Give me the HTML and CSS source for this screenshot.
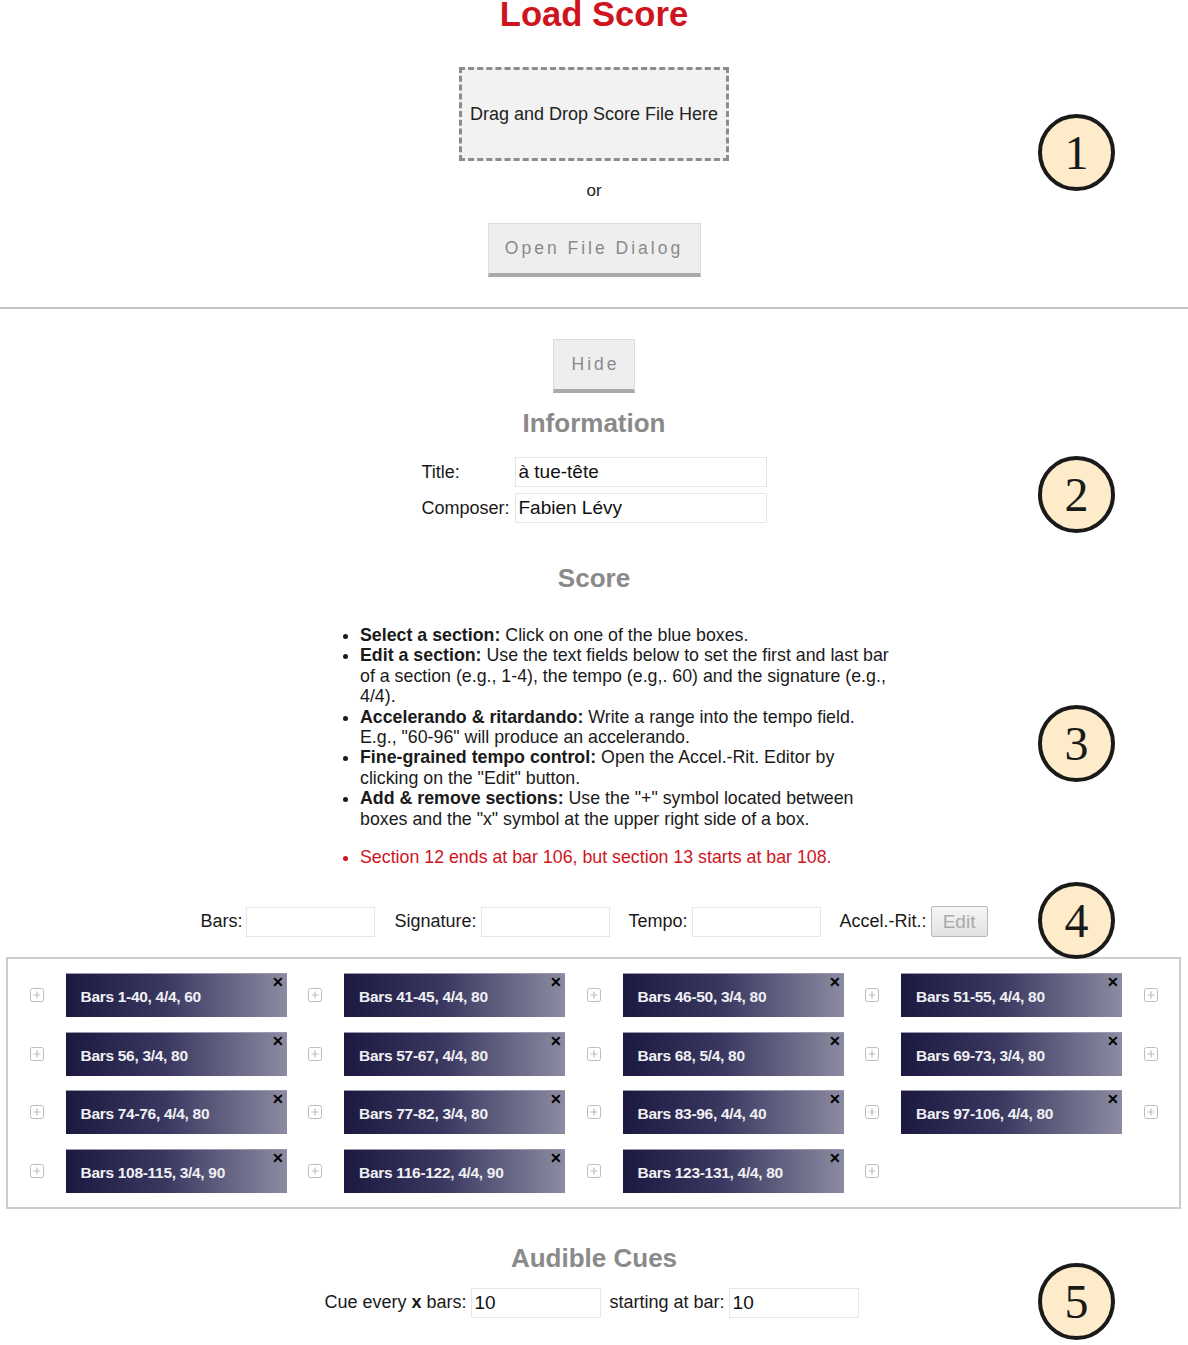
FILE: index.html
```html
<!DOCTYPE html>
<html lang="en">
<head>
<meta charset="utf-8">
<title>Load Score</title>
<link rel="stylesheet" href="styles.css">
</head>
<body>
<div class="page">
  <section class="load">
    <h1 class="title">Load Score</h1>
    <div class="dropzone">Drag and Drop Score File Here</div>
    <p class="or">or</p>
    <button class="btn btn-open">Open File Dialog</button>
  </section>

  <hr class="sep">

  <section class="info">
    <button class="btn btn-hide">Hide</button>
    <h2 class="heading h-info">Information</h2>
    <div class="info-form">
      <label class="lbl">Title:</label>
      <input class="field field-big" type="text" value="à tue-tête">
      <label class="lbl">Composer:</label>
      <input class="field field-big" type="text" value="Fabien Lévy">
    </div>
  </section>

  <section class="score">
    <h2 class="heading h-score">Score</h2>
    <ul class="help">
      <li><b>Select a section:</b> Click on one of the blue boxes.</li>
      <li><b>Edit a section:</b> Use the text fields below to set the first and last bar of a section (e.g., 1-4), the tempo (e.g,. 60) and the signature (e.g., 4/4).</li>
      <li><b>Accelerando &amp; ritardando:</b> Write a range into the tempo field. E.g., "60-96" will produce an accelerando.</li>
      <li><b>Fine-grained tempo control:</b> Open the Accel.-Rit. Editor by clicking on the "Edit" button.</li>
      <li><b>Add &amp; remove sections:</b> Use the "+" symbol located between boxes and the "x" symbol at the upper right side of a box.</li>
    </ul>
    <ul class="help errors">
      <li>Section 12 ends at bar 106, but section 13 starts at bar 108.</li>
    </ul>

    <div class="controls">
      <div class="ctl"><label class="lbl">Bars:</label><input class="field field-sm" type="text"></div>
      <div class="ctl"><label class="lbl">Signature:</label><input class="field field-sm" type="text"></div>
      <div class="ctl"><label class="lbl">Tempo:</label><input class="field field-sm" type="text"></div>
      <div class="ctl"><label class="lbl">Accel.-Rit.:</label><button class="btn-edit">Edit</button></div>
    </div>

    <div class="sections">
      <div class="row">
        <span class="plus"><svg viewBox="0 0 14 14" width="14" height="14"><rect x="0.5" y="0.5" width="13" height="13" rx="2" fill="#fff" stroke="#bdbdbd"/><path d="M7 3.5v7M3.5 7h7" stroke="#bdbdbd" stroke-width="1.2"/></svg></span>
        <div class="box">Bars 1-40, 4/4, 60<span class="x">✕</span></div>
        <span class="plus"><svg viewBox="0 0 14 14" width="14" height="14"><rect x="0.5" y="0.5" width="13" height="13" rx="2" fill="#fff" stroke="#bdbdbd"/><path d="M7 3.5v7M3.5 7h7" stroke="#bdbdbd" stroke-width="1.2"/></svg></span>
        <div class="box">Bars 41-45, 4/4, 80<span class="x">✕</span></div>
        <span class="plus"><svg viewBox="0 0 14 14" width="14" height="14"><rect x="0.5" y="0.5" width="13" height="13" rx="2" fill="#fff" stroke="#bdbdbd"/><path d="M7 3.5v7M3.5 7h7" stroke="#bdbdbd" stroke-width="1.2"/></svg></span>
        <div class="box">Bars 46-50, 3/4, 80<span class="x">✕</span></div>
        <span class="plus"><svg viewBox="0 0 14 14" width="14" height="14"><rect x="0.5" y="0.5" width="13" height="13" rx="2" fill="#fff" stroke="#bdbdbd"/><path d="M7 3.5v7M3.5 7h7" stroke="#bdbdbd" stroke-width="1.2"/></svg></span>
        <div class="box">Bars 51-55, 4/4, 80<span class="x">✕</span></div>
        <span class="plus"><svg viewBox="0 0 14 14" width="14" height="14"><rect x="0.5" y="0.5" width="13" height="13" rx="2" fill="#fff" stroke="#bdbdbd"/><path d="M7 3.5v7M3.5 7h7" stroke="#bdbdbd" stroke-width="1.2"/></svg></span>
      </div>
      <div class="row">
        <span class="plus"><svg viewBox="0 0 14 14" width="14" height="14"><rect x="0.5" y="0.5" width="13" height="13" rx="2" fill="#fff" stroke="#bdbdbd"/><path d="M7 3.5v7M3.5 7h7" stroke="#bdbdbd" stroke-width="1.2"/></svg></span>
        <div class="box">Bars 56, 3/4, 80<span class="x">✕</span></div>
        <span class="plus"><svg viewBox="0 0 14 14" width="14" height="14"><rect x="0.5" y="0.5" width="13" height="13" rx="2" fill="#fff" stroke="#bdbdbd"/><path d="M7 3.5v7M3.5 7h7" stroke="#bdbdbd" stroke-width="1.2"/></svg></span>
        <div class="box">Bars 57-67, 4/4, 80<span class="x">✕</span></div>
        <span class="plus"><svg viewBox="0 0 14 14" width="14" height="14"><rect x="0.5" y="0.5" width="13" height="13" rx="2" fill="#fff" stroke="#bdbdbd"/><path d="M7 3.5v7M3.5 7h7" stroke="#bdbdbd" stroke-width="1.2"/></svg></span>
        <div class="box">Bars 68, 5/4, 80<span class="x">✕</span></div>
        <span class="plus"><svg viewBox="0 0 14 14" width="14" height="14"><rect x="0.5" y="0.5" width="13" height="13" rx="2" fill="#fff" stroke="#bdbdbd"/><path d="M7 3.5v7M3.5 7h7" stroke="#bdbdbd" stroke-width="1.2"/></svg></span>
        <div class="box">Bars 69-73, 3/4, 80<span class="x">✕</span></div>
        <span class="plus"><svg viewBox="0 0 14 14" width="14" height="14"><rect x="0.5" y="0.5" width="13" height="13" rx="2" fill="#fff" stroke="#bdbdbd"/><path d="M7 3.5v7M3.5 7h7" stroke="#bdbdbd" stroke-width="1.2"/></svg></span>
      </div>
      <div class="row">
        <span class="plus"><svg viewBox="0 0 14 14" width="14" height="14"><rect x="0.5" y="0.5" width="13" height="13" rx="2" fill="#fff" stroke="#bdbdbd"/><path d="M7 3.5v7M3.5 7h7" stroke="#bdbdbd" stroke-width="1.2"/></svg></span>
        <div class="box">Bars 74-76, 4/4, 80<span class="x">✕</span></div>
        <span class="plus"><svg viewBox="0 0 14 14" width="14" height="14"><rect x="0.5" y="0.5" width="13" height="13" rx="2" fill="#fff" stroke="#bdbdbd"/><path d="M7 3.5v7M3.5 7h7" stroke="#bdbdbd" stroke-width="1.2"/></svg></span>
        <div class="box">Bars 77-82, 3/4, 80<span class="x">✕</span></div>
        <span class="plus"><svg viewBox="0 0 14 14" width="14" height="14"><rect x="0.5" y="0.5" width="13" height="13" rx="2" fill="#fff" stroke="#bdbdbd"/><path d="M7 3.5v7M3.5 7h7" stroke="#bdbdbd" stroke-width="1.2"/></svg></span>
        <div class="box">Bars 83-96, 4/4, 40<span class="x">✕</span></div>
        <span class="plus"><svg viewBox="0 0 14 14" width="14" height="14"><rect x="0.5" y="0.5" width="13" height="13" rx="2" fill="#fff" stroke="#bdbdbd"/><path d="M7 3.5v7M3.5 7h7" stroke="#bdbdbd" stroke-width="1.2"/></svg></span>
        <div class="box">Bars 97-106, 4/4, 80<span class="x">✕</span></div>
        <span class="plus"><svg viewBox="0 0 14 14" width="14" height="14"><rect x="0.5" y="0.5" width="13" height="13" rx="2" fill="#fff" stroke="#bdbdbd"/><path d="M7 3.5v7M3.5 7h7" stroke="#bdbdbd" stroke-width="1.2"/></svg></span>
      </div>
      <div class="row">
        <span class="plus"><svg viewBox="0 0 14 14" width="14" height="14"><rect x="0.5" y="0.5" width="13" height="13" rx="2" fill="#fff" stroke="#bdbdbd"/><path d="M7 3.5v7M3.5 7h7" stroke="#bdbdbd" stroke-width="1.2"/></svg></span>
        <div class="box">Bars 108-115, 3/4, 90<span class="x">✕</span></div>
        <span class="plus"><svg viewBox="0 0 14 14" width="14" height="14"><rect x="0.5" y="0.5" width="13" height="13" rx="2" fill="#fff" stroke="#bdbdbd"/><path d="M7 3.5v7M3.5 7h7" stroke="#bdbdbd" stroke-width="1.2"/></svg></span>
        <div class="box">Bars 116-122, 4/4, 90<span class="x">✕</span></div>
        <span class="plus"><svg viewBox="0 0 14 14" width="14" height="14"><rect x="0.5" y="0.5" width="13" height="13" rx="2" fill="#fff" stroke="#bdbdbd"/><path d="M7 3.5v7M3.5 7h7" stroke="#bdbdbd" stroke-width="1.2"/></svg></span>
        <div class="box">Bars 123-131, 4/4, 80<span class="x">✕</span></div>
        <span class="plus"><svg viewBox="0 0 14 14" width="14" height="14"><rect x="0.5" y="0.5" width="13" height="13" rx="2" fill="#fff" stroke="#bdbdbd"/><path d="M7 3.5v7M3.5 7h7" stroke="#bdbdbd" stroke-width="1.2"/></svg></span>
      </div>
    </div>
  </section>

  <section class="cues">
    <h2 class="heading h-cues">Audible Cues</h2>
    <div class="cue-row">
      <div class="ctl"><label class="lbl">Cue every <b>x</b> bars:</label><input class="field field-cue" type="text" value="10"></div>
      <div class="ctl"><label class="lbl">starting at bar:</label><input class="field field-cue" type="text" value="10"></div>
    </div>
  </section>

  <span class="num n1">1</span>
  <span class="num n2">2</span>
  <span class="num n3">3</span>
  <span class="num n4">4</span>
  <span class="num n5">5</span>
</div>
</body>
</html>
```

FILE: styles.css
```css
html, body {
  margin: 0;
  padding: 0;
  background: #fff;
}
body {
  font-family: "Liberation Sans", Arial, Helvetica, sans-serif;
  color: #1a1a1a;
}
.page {
  position: relative;
  width: 1188px;
  min-height: 1345px;
  overflow: hidden;
}

/* Load section */
.load {
  display: flex;
  flex-direction: column;
  align-items: center;
}
.title {
  margin: -6px 0 0;
  font-size: 34.6px;
  line-height: 40px;
  font-weight: bold;
  color: #d0141e;
}
.dropzone {
  box-sizing: border-box;
  margin-top: 33px;
  width: 270px;
  height: 94px;
  border: 3px dashed #8c8c8c;
  background: #f2f2f2;
  display: flex;
  align-items: center;
  justify-content: center;
  font-size: 18px;
  color: #222;
}
.or {
  margin: 20px 0 0;
  font-size: 17px;
  line-height: 20px;
  color: #222;
}
.btn {
  box-sizing: border-box;
  font-family: "Liberation Sans", Arial, sans-serif;
  background: #eeeeee;
  border: 1px solid #dcdcdc;
  border-bottom: 4px solid #aaaaaa;
  color: #8a8a8a;
  letter-spacing: 3px;
  font-size: 17.5px;
  padding: 0;
  cursor: pointer;
}
.btn-open {
  margin-top: 22px;
  width: 213px;
  height: 54px;
}
.sep {
  margin: 30px 0 0;
  border: 0;
  border-top: 2px solid #c4c4c4;
  height: 0;
}

/* Information */
.info {
  display: flex;
  flex-direction: column;
  align-items: center;
}
.btn-hide {
  margin-top: 30px;
  width: 82px;
  height: 54px;
  padding-left: 3px;
}
.heading {
  margin: 0;
  font-size: 26px;
  line-height: 30px;
  font-weight: bold;
  color: #8a8a8a;
  text-align: center;
}
.h-info { margin-top: 15px; }
.info-form {
  margin-top: 19px;
  display: grid;
  grid-template-columns: 93px 252px;
  row-gap: 6px;
  align-items: center;
}
.lbl {
  font-size: 18px;
  color: #1a1a1a;
  white-space: nowrap;
}
.field {
  box-sizing: border-box;
  height: 30px;
  border: 1px solid #e6e6e6;
  background: #fff;
  font-family: "Liberation Sans", Arial, sans-serif;
  font-size: 19px;
  color: #111;
  padding: 0 3px;
  margin: 0;
  outline: none;
}
.field-big { width: 252px; }

/* Score */
.h-score { margin-top: 40px; }
.help {
  width: 533px;
  margin: 32px 0 0 320px;
  padding: 0 0 0 40px;
  font-size: 17.8px;
  line-height: 20.4px;
  color: #1a1a1a;
}
.errors {
  margin-top: 18px;
  color: #d0141e;
}
.controls {
  margin-top: 39px;
  display: flex;
  justify-content: center;
  gap: 19px;
}
.ctl {
  display: flex;
  align-items: center;
  gap: 4px;
}
.field-sm { width: 129px; }
.btn-edit {
  box-sizing: border-box;
  width: 57px;
  height: 31px;
  border: 1px solid #b9b9b9;
  border-radius: 2px;
  background: linear-gradient(#f6f6f6, #e2e2e2);
  color: #a9a9a9;
  font-family: "Liberation Sans", Arial, sans-serif;
  font-size: 19px;
  padding: 0;
}

.sections {
  margin: 20px 7px 0 6px;
  border: 2px solid #cccccc;
  padding: 14px 0 14px 0;
  display: flex;
  flex-direction: column;
  gap: 14.5px;
}
.row {
  display: flex;
  align-items: center;
  height: 44px;
}
.plus {
  display: flex;
  justify-content: center;
  align-items: center;
  flex: 0 0 57.5px;
}
.plus svg { display: block; }
.box {
  position: relative;
  box-sizing: border-box;
  flex: 0 0 221px;
  height: 44px;
  background: linear-gradient(to right, #1b1940 0%, #3a3860 45%, #8c8ba2 100%);
  border-top: 1px solid #9a99b0;
  color: #f0f0f4;
  font-size: 15.5px;
  font-weight: bold;
  line-height: 46px;
  padding-left: 15px;
  letter-spacing: -0.3px;
}
.box .x {
  position: absolute;
  top: 0;
  right: 3px;
  line-height: 16px;
  font-size: 14px;
  font-weight: bold;
  color: #000;
  letter-spacing: 0;
}

/* Cues */
.h-cues { margin-top: 34px; }
.cue-row {
  margin-top: 15px;
  display: flex;
  justify-content: center;
  gap: 9px;
  padding-right: 5px;
}
.field-cue { width: 130px; }

/* Annotation markers */
.num {
  position: absolute;
  left: 1038px;
  box-sizing: border-box;
  width: 77px;
  height: 77px;
  border-radius: 50%;
  border: 4px solid #1a1a1a;
  background: #fdebc9;
  display: flex;
  align-items: center;
  justify-content: center;
  font-family: "Liberation Serif", "Times New Roman", serif;
  font-size: 48px;
  color: #1a1a1a;
  line-height: 1;
}
.n1 { top: 114px; }
.n2 { top: 456px; }
.n3 { top: 705px; }
.n4 { top: 882px; }
.n5 { top: 1263px; }
```
